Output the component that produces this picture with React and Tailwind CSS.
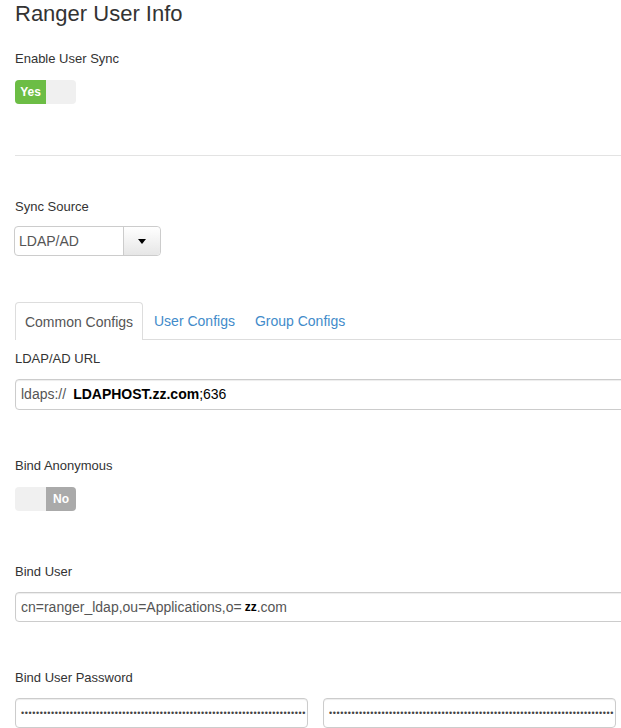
import React from "react";

function Label({ children, className = "" }) {
  return (
    <div className={"text-[13px] leading-[20px] text-[#333] " + className}>{children}</div>
  );
}

function Dots({ n }) {
  return (
    <span className="whitespace-nowrap text-[9px] tracking-[0.6px] text-[#444] leading-none">
      {"•".repeat(n)}
    </span>
  );
}

export default function App() {
  return (
    <div className="w-[621px] h-[728px] overflow-hidden bg-white pl-[15px] font-['Liberation_Sans',Arial,sans-serif] text-[#333]">
      <h3 className="pt-[2px] text-[22px] leading-[1.1] font-normal text-[#333]">Ranger User Info</h3>

      <Label className="mt-[23px]">Enable User Sync</Label>
      <div className="mt-[11px] flex h-[24px] w-[61px] overflow-hidden rounded-[4px] bg-[#f0f0f0]">
        <div className="flex w-[31px] items-center justify-center bg-[#6cbd45] text-[12px] font-bold text-white">Yes</div>
      </div>

      <div className="mt-[51px] h-px bg-[#e3e3e3]" />

      <Label className="mt-[41px]">Sync Source</Label>
      <div className="-ml-px mt-[9px] flex h-[30px] w-[147px] rounded-[4px] border border-[#ccc]">
        <div className="flex w-[108px] items-center pl-[4px] text-[14px] text-[#555]">LDAP/AD</div>
        <div className="flex flex-1 items-center justify-center rounded-r-[4px] border-l border-[#ccc] bg-gradient-to-b from-white to-[#e6e6e6]">
          <svg width="8" height="5" viewBox="0 0 8 5"><path d="M0 0h8L4 5z" fill="#000" /></svg>
        </div>
      </div>

      <div className="mt-[46px] flex h-[38px] border-b border-[#ddd]">
        <div className="-mb-px flex w-[128px] items-center justify-center rounded-t-[4px] border border-b-0 border-[#ddd] bg-white pt-[2px] text-[14px] text-[#555]">
          Common Configs
        </div>
        <div className="ml-[11px] flex items-center pt-[2px] text-[14px] text-[#428bca]">User Configs</div>
        <div className="ml-[20px] flex items-center pt-[2px] text-[14px] text-[#428bca]">Group Configs</div>
      </div>

      <Label className="mt-[9px]">LDAP/AD URL</Label>
      <div className="mt-[10px] flex h-[31px] w-[640px] items-center rounded-[4px] border border-[#ccc] pl-[5px] text-[14px] shadow-[inset_0_1px_1px_rgba(0,0,0,0.075)]">
        <span className="text-[#555]">ldaps://</span>
        <span className="ml-[7px] font-bold text-black">LDAPHOST.zz.com</span>
        <span className="text-black">;636</span>
      </div>

      <Label className="mt-[46px]">Bind Anonymous</Label>
      <div className="mt-[11px] flex h-[24px] w-[61px] overflow-hidden rounded-[4px] bg-[#f0f0f0]">
        <div className="w-[31px]" />
        <div className="flex flex-1 items-center justify-center bg-[#aaa] text-[12px] font-bold text-white">No</div>
      </div>

      <Label className="mt-[51px]">Bind User</Label>
      <div className="mt-[10px] flex h-[30px] w-[640px] items-center rounded-[4px] border border-[#ccc] pl-[5px] text-[14px] text-[#555] shadow-[inset_0_1px_1px_rgba(0,0,0,0.075)]">
        <span>cn=ranger_ldap,ou=Applications,o=</span>
        <span className="ml-[3px] text-[12px] font-bold text-black">zz</span>
        <span>.com</span>
      </div>

      <Label className="mt-[46px]">Bind User Password</Label>
      <div className="mt-[10px] flex gap-[15px]">
        <div className="flex h-[30px] w-[293px] items-center overflow-hidden rounded-[4px] border border-[#ccc] pl-[5px] shadow-[inset_0_1px_1px_rgba(0,0,0,0.075)]">
          <Dots n={76} />
        </div>
        <div className="flex h-[30px] w-[293px] items-center overflow-hidden rounded-[4px] border border-[#ccc] pl-[5px] shadow-[inset_0_1px_1px_rgba(0,0,0,0.075)]">
          <Dots n={76} />
        </div>
      </div>
    </div>
  );
}
